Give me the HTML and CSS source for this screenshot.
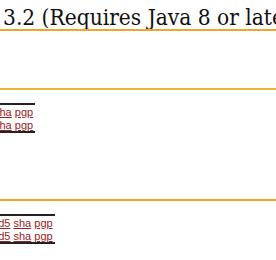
FILE: index.html
```html
<!DOCTYPE html>
<html>
<head>
    <title>Downloads</title>
    <link rel="stylesheet" href="styles.css">
</head>
<body>
<div class="page">
    <h2 class="title">3.2 (Requires Java 8 or later)</h2>

    <div class="section">
        <h3 class="subhead"></h3>
        <table class="files first">
            <tr><td><a href="#">sha</a> <a href="#">pgp</a></td></tr>
            <tr><td><a href="#">sha</a> <a href="#">pgp</a></td></tr>
        </table>
    </div>

    <div class="section">
        <h2 class="rule"></h2>
        <table class="files second">
            <tr><td><a href="#">md5</a> <a href="#">sha</a> <a href="#">pgp</a></td></tr>
            <tr><td><a href="#">md5</a> <a href="#">sha</a> <a href="#">pgp</a></td></tr>
        </table>
    </div>
</div>
</body>
</html>
```
FILE: styles.css
```css
body {
    margin: 0;
    background-color: #fff;
    font-family: "Liberation Sans", Arial, sans-serif;
    overflow: hidden;
}

.page {
    width: 276px;
}

.title {
    margin: 0;
    padding: 5px 0 0 3px;
    font-family: "DejaVu Serif", serif;
    font-stretch: condensed;
    font-weight: normal;
    font-size: 22.5px;
    line-height: 24px;
    color: #111;
    white-space: nowrap;
    overflow: hidden;
    border-bottom: 2px solid #f2a32a;
}

.subhead {
    margin: 0;
    height: 57px;
    border-bottom: 2px solid #e8b43a;
}

.rule {
    margin: 0;
    height: 66px;
    border-bottom: 2px solid #f5a623;
}

.files {
    border-collapse: collapse;
    border-top: 2px solid #222;
    border-bottom: 2px solid #222;
    font-size: 11px;
    margin-top: 13px;
}

.files td {
    padding: 1px 2px 0 0;
    line-height: 12px;
    white-space: nowrap;
}

.files a {
    color: #9b2222;
}

.first {
    margin-left: -6px;
}

.second {
    margin-left: -11px;
}
```
